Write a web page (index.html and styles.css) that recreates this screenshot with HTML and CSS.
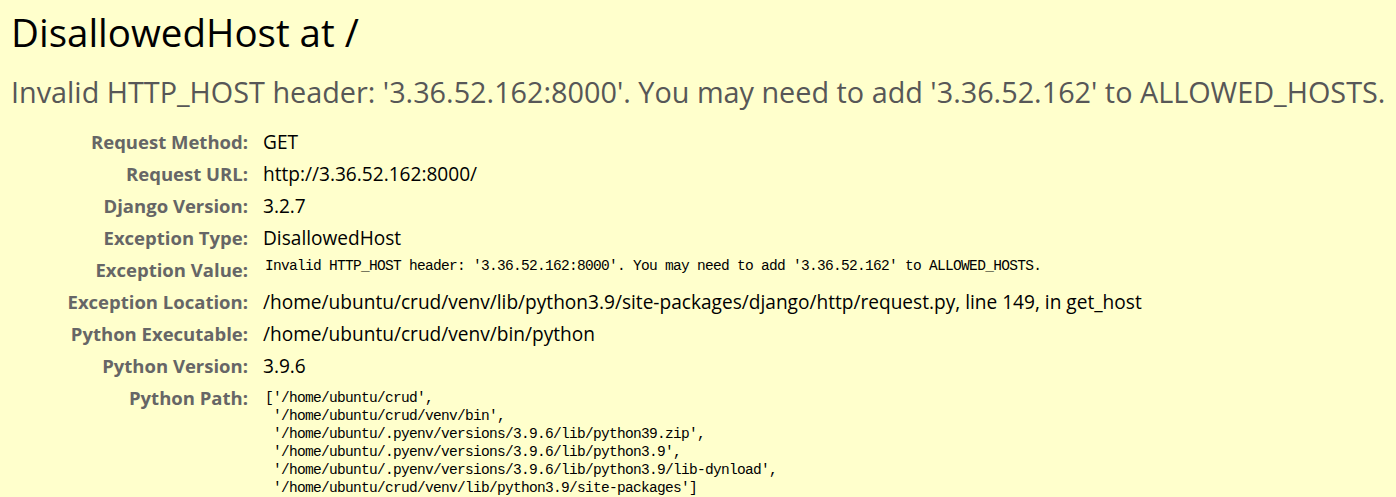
FILE: index.html
```html
<!DOCTYPE html>
<html lang="en">
<head>
<meta charset="utf-8">
<title>DisallowedHost at /</title>
<link rel="stylesheet" href="styles.css">
</head>
<body>
<div class="summary">
  <h1 class="title">DisallowedHost at /</h1>
  <pre class="exception-value">Invalid HTTP_HOST header: '3.36.52.162:8000'. You may need to add '3.36.52.162' to ALLOWED_HOSTS.</pre>
  <table class="meta">
    <tbody>
      <tr><th>Request Method:</th><td>GET</td></tr>
      <tr><th>Request URL:</th><td>http://3.36.52.162:8000/</td></tr>
      <tr><th>Django Version:</th><td>3.2.7</td></tr>
      <tr><th>Exception Type:</th><td>DisallowedHost</td></tr>
      <tr><th>Exception Value:</th><td><pre class="mono mono-inline">Invalid HTTP_HOST header: '3.36.52.162:8000'. You may need to add '3.36.52.162' to ALLOWED_HOSTS.</pre></td></tr>
      <tr><th>Exception Location:</th><td>/home/ubuntu/crud/venv/lib/python3.9/site-packages/django/http/request.py, line 149, in get_host</td></tr>
      <tr><th>Python Executable:</th><td>/home/ubuntu/crud/venv/bin/python</td></tr>
      <tr><th>Python Version:</th><td>3.9.6</td></tr>
      <tr><th>Python Path:</th><td><pre class="mono">['/home/ubuntu/crud',
 '/home/ubuntu/crud/venv/bin',
 '/home/ubuntu/.pyenv/versions/3.9.6/lib/python39.zip',
 '/home/ubuntu/.pyenv/versions/3.9.6/lib/python3.9',
 '/home/ubuntu/.pyenv/versions/3.9.6/lib/python3.9/lib-dynload',
 '/home/ubuntu/crud/venv/lib/python3.9/site-packages']</pre></td></tr>
    </tbody>
  </table>
</div>
</body>
</html>
```

FILE: styles.css
```css
html, body {
  margin: 0;
  padding: 0;
}

body {
  background: #ffffcc;
  color: #000;
  font-family: "Open Sans", "Noto Sans CJK KR", sans-serif;
}

.summary {
  padding: 6px 10px 0 11px;
}

.title {
  margin: 0;
  font-size: 38.5px;
  font-weight: normal;
  line-height: 52px;
}

.exception-value {
  margin: 14px 0 14px;
  font-family: inherit;
  font-size: 28.8px;
  line-height: 40px;
  color: #575757;
  white-space: pre-wrap;
}

.meta {
  border-collapse: collapse;
  font-size: 19.1px;
}

.meta th,
.meta td {
  vertical-align: top;
  padding: 3px 4px;
  line-height: 26px;
}

.meta th {
  width: 233px;
  text-align: right;
  color: #666;
  font-size: 18.5px;
  font-weight: bold;
  padding-right: 11px;
}

.mono {
  margin: 0;
  padding: 4px 0 0 2px;
  font-family: "Liberation Mono", "DejaVu Sans Mono", monospace;
  font-size: 14.5px;
  letter-spacing: -0.7px;
  line-height: 18px;
  white-space: pre;
}

.mono-inline {
  padding-top: 0;
}
```
